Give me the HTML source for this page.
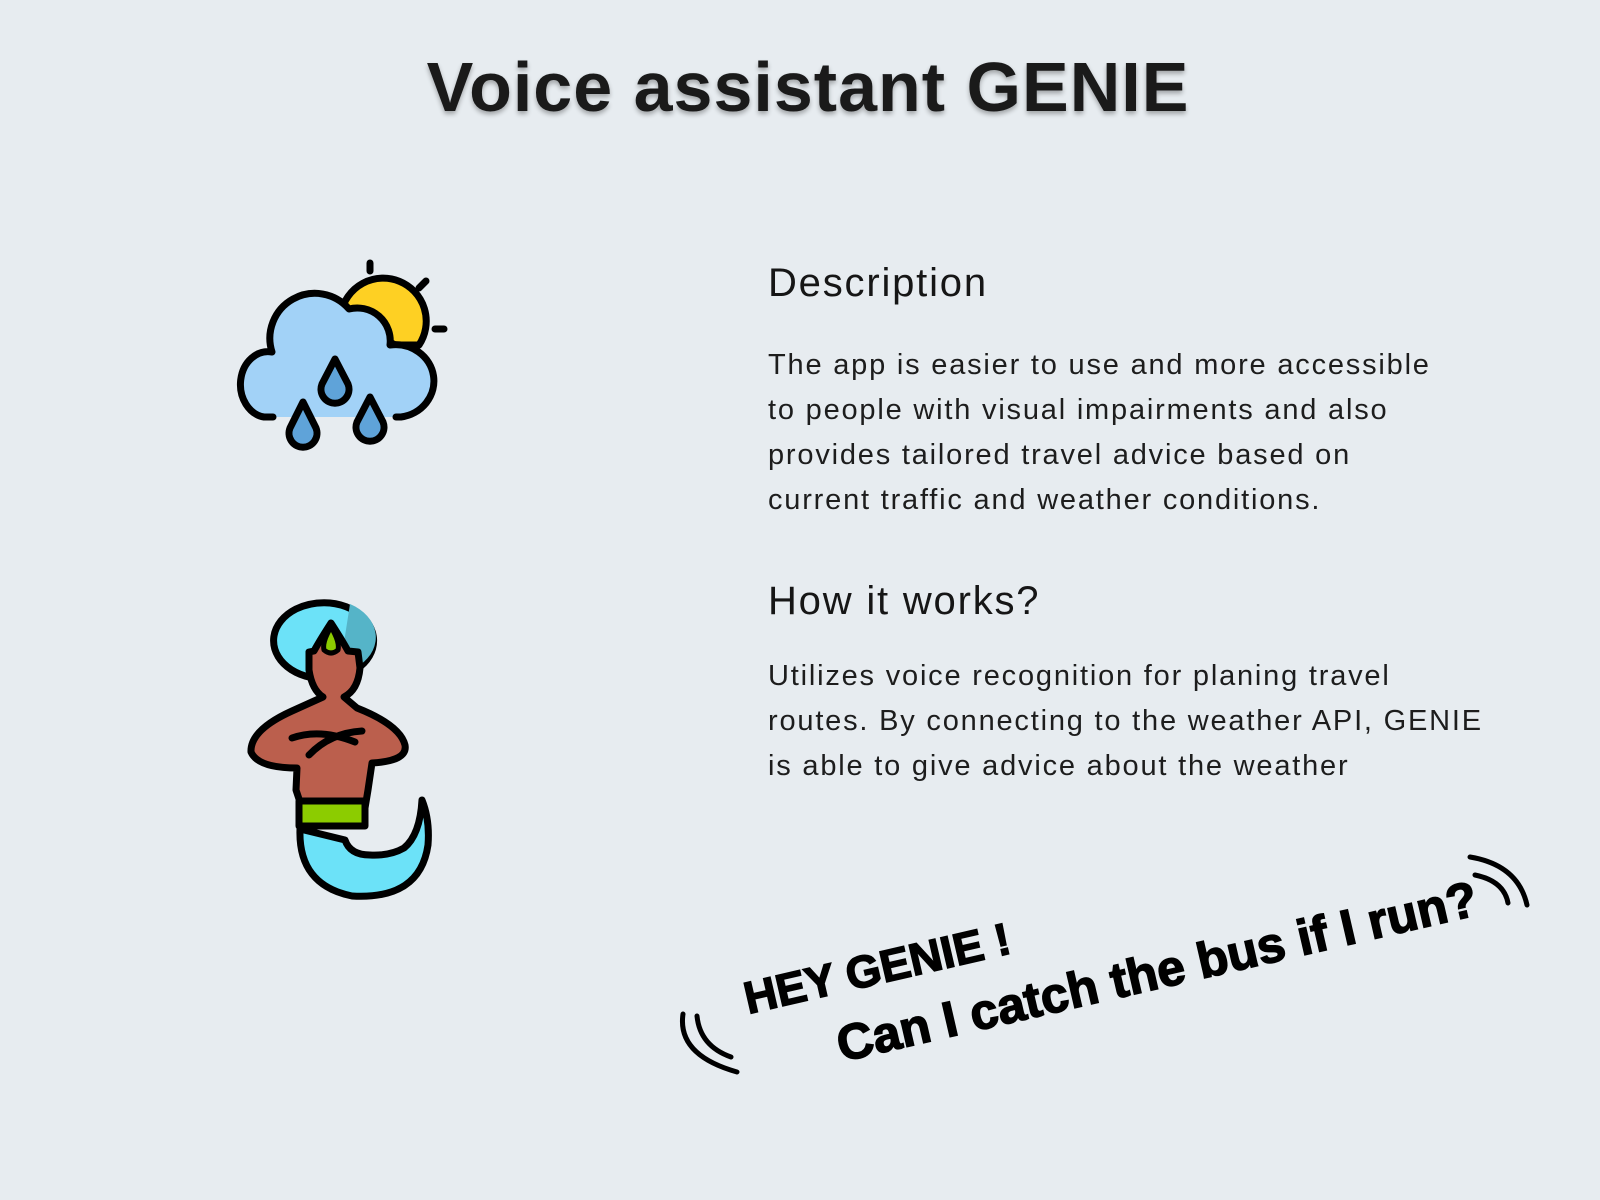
<!DOCTYPE html>
<html><head><meta charset="utf-8"><style>
html,body{margin:0;padding:0;width:1600px;height:1200px;background:#e7ecf0;overflow:hidden;font-family:"Liberation Sans",sans-serif;color:#161616}
.t{position:absolute;left:0;width:1600px;top:47px;text-align:center;font-weight:bold;font-size:70px;letter-spacing:1px;text-shadow:0 3px 5px rgba(0,0,0,.3);color:#1a1a1a;margin-left:8px}
h2{position:absolute;margin:0;font-weight:normal;font-size:40px;letter-spacing:1.8px;left:768px}
p{position:absolute;margin:0;left:768px;font-size:29px;line-height:45px;letter-spacing:1.8px;color:#1d1d1d;width:800px}
.sp{position:absolute;font-weight:900;font-size:50px;color:#000;transform-origin:0 0;white-space:nowrap;-webkit-text-stroke:1.5px #000}
</style></head><body>
<div class="t">Voice assistant GENIE</div>
<h2 style="top:261px">Description</h2>
<p style="top:343px">The app is easier to use and more accessible<br>to people with visual impairments and also<br>provides tailored travel advice based on<br>current traffic and weather conditions.</p>
<h2 style="top:579px">How it works?</h2>
<p style="top:654px">Utilizes voice recognition for planing travel<br>routes. By connecting to the weather API, GENIE<br>is able to give advice about the weather</p>

<svg style="position:absolute;left:0;top:0" width="1600" height="1200">
<g stroke="#000" stroke-width="7" stroke-linecap="round" stroke-linejoin="round">
<path d="M341,313 A43,43 0 1,1 419,345 L395,345 Z" fill="#fed023"/>
<line x1="370" y1="263" x2="370" y2="271"/><line x1="419" y1="288" x2="426" y2="281"/><line x1="435" y1="329" x2="444" y2="329"/>
<path d="M273,417 L264,417 A26,31 0 0,1 272,352 A45,45 0 0,1 349,309 A33,33 0 0,1 390,345 A38,36 0 0,1 401,417 L396,417" fill="#a2d2f7"/>
<path d="M335,359 L322,384 A14,14 0 1,0 348,384 Z" fill="#5fa3d9"/>
<path d="M303,402 L290,428 A14,14 0 1,0 316,428 Z" fill="#5fa3d9"/>
<path d="M370,397 L357,422 A14,14 0 1,0 383,422 Z" fill="#5fa3d9"/>
<path d="M296,609 A50,38 0 1,0 330,603 A52,38 0 0,0 296,609Z" fill="#6ce2f8"/>
<path d="M350,604 A50,38 0 0,1 360,665 L340,668 Z" fill="#55b4c8" stroke="none"/>
<path d="M331,623 Q320,640 314,651 L309,652 L309,670 Q312,690 323,697 L292,711 Q250,730 251,752 Q258,768 297,768 L296,790 L302,808 L365,808 L368,790 L372,763 Q408,761 405,745 Q400,725 357,708 L344,697 Q358,690 360,668 L358,652 L348,651 Q342,640 331,623Z" fill="#bb5f4d"/>
<path d="M331,627 Q322,642 324,650 Q331,656 338,650 Q340,642 331,627Z" fill="#8ccc00" stroke-width="5"/>
<path d="M292,738 Q320,728 355,742 M309,755 Q330,733 362,731" fill="none"/>
<path d="M299,801 L365,801 L365,826 L299,826 Z" fill="#8ccc00"/>
<path d="M300,829 Q298,885 352,896 Q420,900 428,845 Q430,820 422,800 Q420,835 404,848 Q390,856 370,855 Q350,855 345,840 L300,829Z" fill="#6ce2f8"/>
<path d="M683,1014 Q677,1055 737,1072" fill="none" stroke-width="5"/>
<path d="M697,1016 Q700,1046 731,1057" fill="none" stroke-width="5"/>
<path d="M1470,857 Q1518,865 1527,905" fill="none" stroke-width="5"/>
<path d="M1475,875 Q1504,881 1508,903" fill="none" stroke-width="5"/>
</g>
</svg>
<div class="sp" style="left:739px;top:974px;font-size:45px;transform:rotate(-13deg)">HEY GENIE !</div>
<div class="sp" style="left:831px;top:1017px;transform:rotate(-13deg)">Can I catch the bus if I run?</div>
</body></html>
